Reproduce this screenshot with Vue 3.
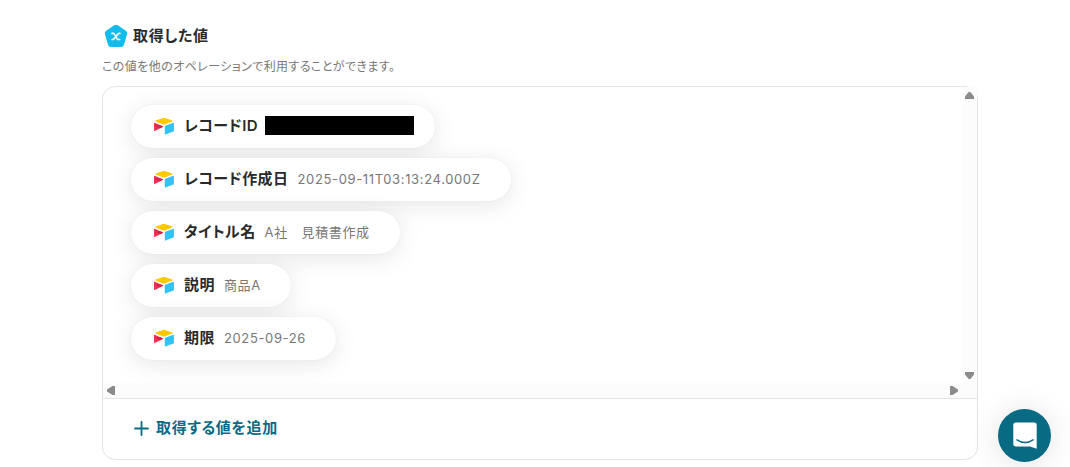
<script setup>
const values = [
  { label: 'レコードID', value: '', masked: true },
  { label: 'レコード作成日', value: '2025-09-11T03:13:24.000Z' },
  { label: 'タイトル名', value: 'A社　見積書作成' },
  { label: '説明', value: '商品A' },
  { label: '期限', value: '2025-09-26' },
]
</script>

<template>
  <main class="page">
    <h2 class="title">
      <svg class="title-icon" viewBox="0 0 24 24" aria-hidden="true">
        <path d="M10.200 1.300q1.800-1.200 3.600 0l8.300 5.800q1.600 1.100 1 3l-3.200 11q-.6 1.900-2.600 1.900H6.700q-2 0-2.600-1.900L.9 10.100q-.6-1.900 1-3z" fill="#12bdee" />
        <path d="M8 9.300h1.200q.8 0 1.200.8l2.700 4.600q.5.800 1.300.8h1.200M15.900 9.300h-.6q-.8 0-1.300.7l-4 4.800q-.5.700-1.300.7h-.6" fill="none" stroke="#fff" stroke-width="1.700" stroke-linecap="round" />
      </svg>
      <span>取得した値</span>
    </h2>
    <p class="lead">この値を他のオペレーションで利用することができます。</p>

    <section class="card">
      <div class="viewport">
        <ul class="list">
          <li v-for="item in values" :key="item.label" class="pill" :class="{ 'pill-masked': item.masked }">
            <svg class="pill-icon" viewBox="0 0 22 18" aria-hidden="true">
              <path d="M10 .9q1-.4 2 0l7.300 2.700q.8.400 0 .8L12 7.400q-1 .4-2 0L2.600 4.400q-.8-.4 0-.8z" fill="#ffca05" />
              <path d="M11.800 9.500q0-.5.500-.7l8-3.100q.6-.2.600.4v7.700q0 .5-.5.700l-8 3.100q-.6.200-.6-.4z" fill="#33c2f3" />
              <path d="M1 6.200q0-.7.700-.4l8 3.500q.6.300 0 .6l-8 4q-.7.300-.7-.4z" fill="#ee3052" />
              <path d="M7.200 8.200l2.500 1.100q.6.300 0 .6l-2.700 1.300-5.200-2.800z" fill="#c9284a" />
            </svg>
            <span class="label">{{ item.label }}</span>
            <span v-if="item.masked" class="mask"></span>
            <span v-else class="value">{{ item.value }}</span>
          </li>
        </ul>
        <div class="track track-y" aria-hidden="true">
          <svg class="arrow" viewBox="0 0 9 7"><path d="M3.600 0h1.800L9 4.500V7H0V4.500z" /></svg>
          <svg class="arrow" viewBox="0 0 9 7"><path d="M0 0h9v2.500L5.400 7H3.600L0 2.500z" /></svg>
        </div>
        <div class="track track-x" aria-hidden="true">
          <svg class="arrow-side" viewBox="0 0 8 9"><path d="M8 0v9H5.500L0 5.400V3.600L5.500 0z" /></svg>
          <svg class="arrow-side" viewBox="0 0 8 9"><path d="M0 0h2.500L8 3.600v1.800L2.500 9H0z" /></svg>
        </div>
      </div>
      <footer class="footer">
        <button type="button" class="add">
          <svg class="plus" viewBox="0 0 15 15" aria-hidden="true">
            <path d="M7.500 1v13M1 7.500h13" fill="none" stroke="currentColor" stroke-width="1.800" stroke-linecap="round" />
          </svg>
          <span>取得する値を追加</span>
        </button>
      </footer>
    </section>

    <button type="button" class="chat" aria-label="チャットを開く">
      <svg class="chat-icon" viewBox="0 0 24 28" aria-hidden="true">
        <path d="M3 .5h18q2.700 0 2.700 2.700v23.600L17 24.500H3Q.3 24.500.3 21.800V3.200Q.3.500 3 .5z" fill="#fff" />
        <path d="M4 17.800q8 5.400 16 0" fill="none" stroke="#086b83" stroke-width="1.500" stroke-linecap="round" />
      </svg>
    </button>
  </main>
</template>

<style>
body {
  margin: 0;
  background: #fff;
}
</style>

<style scoped>
.page {
  padding: 24px 92px 7px 102px;
  font-family: Inter, "Noto Sans CJK JP", sans-serif;
  font-feature-settings: "palt";
  letter-spacing: 0.04em;
  color: #2a2a2a;
}
.title {
  display: flex;
  align-items: center;
  gap: 5px;
  margin: 0;
  padding-left: 2px;
  font-size: 15px;
  line-height: 24px;
  font-weight: 600;
}
.title-icon {
  width: 24px;
  height: 24px;
}
.lead {
  margin: 9px 0;
  font-size: 12px;
  line-height: 20px;
  letter-spacing: 0.035em;
  color: #777;
}
.card {
  border: 1px solid #e4e4e4;
  border-radius: 13px;
}
.viewport {
  display: grid;
  grid-template-columns: 1fr 15px;
  grid-template-rows: auto 15px;
}
.list {
  display: flex;
  flex-direction: column;
  align-items: flex-start;
  gap: 10px;
  min-width: 0;
  margin: 0;
  padding: 18px 28px 23px;
  list-style: none;
}
.pill {
  display: flex;
  align-items: center;
  box-sizing: border-box;
  height: 43px;
  padding: 0 30px 1px 22px;
  border-radius: 22px;
  background: #fff;
  box-shadow: 0 4px 24px rgba(0, 0, 0, 0.1), 0 0 2px rgba(0, 0, 0, 0.06);
  white-space: nowrap;
}
.pill-masked {
  padding-right: 21px;
}
.pill-icon {
  width: 22px;
  height: 18px;
  margin-right: 9px;
}
.label {
  font-size: 15px;
  line-height: 24px;
  letter-spacing: 0.03em;
  font-weight: 600;
}
.value {
  margin-left: 9px;
  font-size: 13px;
  line-height: 20px;
  color: #777;
}
.mask {
  width: 149px;
  height: 19px;
  margin: 0 0 1px 7px;
  background: #000;
}
.track {
  display: flex;
  align-items: center;
  justify-content: space-between;
  background: #fcfcfc;
}
.track-y {
  flex-direction: column;
  padding: 5px 0 4px;
}
.track-x {
  grid-column: 1 / -1;
  padding: 0 19px 0 4px;
}
.arrow {
  width: 9px;
  height: 7px;
  fill: #8b8b8b;
}
.arrow-side {
  width: 8px;
  height: 9px;
  fill: #8b8b8b;
}
.footer {
  padding: 17px 31px 19px;
  border-top: 1px solid #e4e4e4;
}
.add {
  display: flex;
  align-items: center;
  gap: 7px;
  padding: 0;
  border: 0;
  background: none;
  color: #086b83;
  font: inherit;
  font-feature-settings: "palt";
  font-size: 15px;
  line-height: 24px;
  font-weight: 600;
  letter-spacing: inherit;
  cursor: pointer;
}
.plus {
  width: 15px;
  height: 15px;
}
.chat {
  position: fixed;
  right: 19px;
  bottom: 5px;
  display: flex;
  align-items: center;
  justify-content: center;
  width: 53px;
  height: 53px;
  padding: 0;
  border: 0;
  border-radius: 50%;
  background: #086b83;
  box-shadow: 0 2px 32px rgba(0, 0, 0, 0.12);
  cursor: pointer;
}
.chat-icon {
  width: 24px;
  height: 28px;
}
</style>
